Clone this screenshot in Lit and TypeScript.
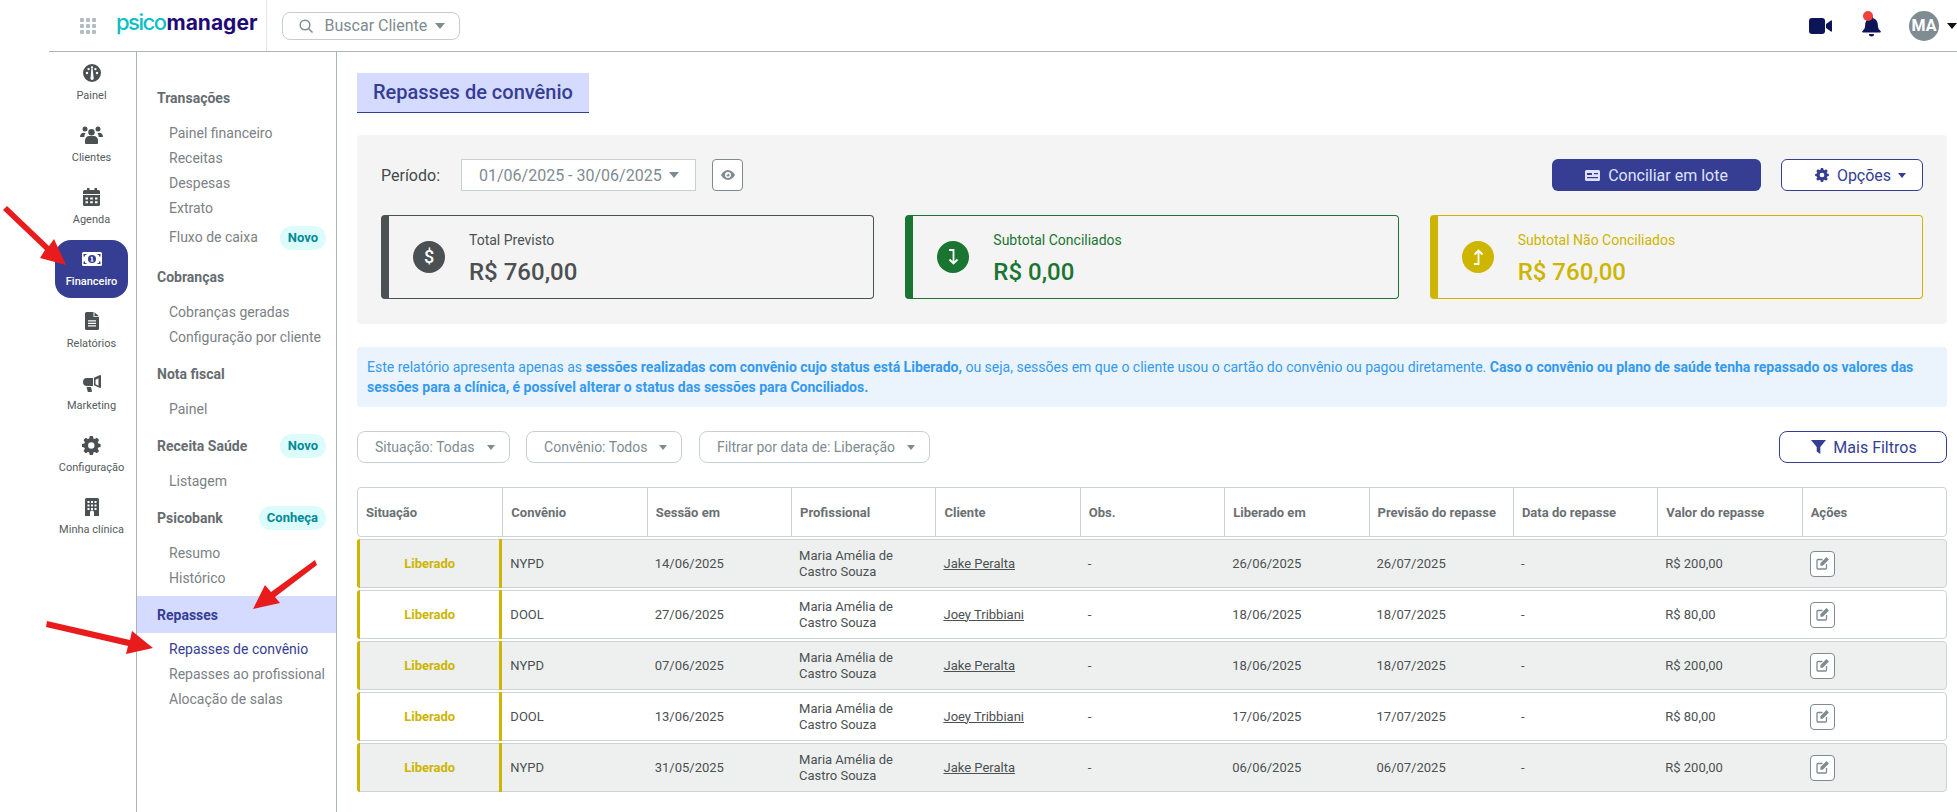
import { LitElement, html, css, svg } from "lit";
import { customElement } from "lit/decorators.js";

const I = {
  painel: svg`<path fill-rule="evenodd" d="M9 0a9 9 0 1 0 0 18A9 9 0 0 0 9 0ZM4 10.200a1.200 1.200 0 1 1 0-2.400 1.200 1.200 0 0 1 0 2.400Zm1.600-3.900a1.200 1.200 0 1 1 0-2.400 1.200 1.200 0 0 1 0 2.400ZM9 4.700a1.200 1.200 0 1 1 0-2.400 1.200 1.200 0 0 1 0 2.400Zm1.600 8.900a1.700 1.700 0 1 1-3 0L8.300 5h1.400l.9 8.600Zm1.800-7.300a1.200 1.200 0 1 1 0-2.400 1.200 1.200 0 0 1 0 2.400Zm1.600 3.900a1.200 1.200 0 1 1 0-2.400 1.200 1.200 0 0 1 0 2.400Z"/>`,
  clientes: svg`<circle cx="5" cy="3" r="2.500"/><circle cx="18" cy="3" r="2.500"/><circle cx="11.500" cy="6.300" r="3.200"/><path d="M0 11c0-2.700 1.500-4.300 3.500-4.300.8 0 1.500.2 2 .6-.8 1-1.200 2.200-1.200 3.700H0ZM23 11c0-2.700-1.500-4.300-3.500-4.300-.8 0-1.500.2-2 .6.8 1 1.200 2.200 1.200 3.700H23ZM5 17v-2.500c0-2.800 2-4.500 4-4.500h5c2 0 4 1.700 4 4.500V17c0 .7-.5 1-1 1H6c-.5 0-1-.3-1-1Z"/>`,
  agenda: svg`<path fill-rule="evenodd" d="M4 0h2.500v2h5V0H14v2h1.500A1.500 1.500 0 0 1 17 3.500V6H0V3.500A1.500 1.500 0 0 1 1.500 2H4V0ZM0 7h17v9.500a1.500 1.500 0 0 1-1.500 1.500h-14A1.500 1.500 0 0 1 0 16.500V7Zm2.500 2.500v2h2.500v-2H2.500Zm4.700 0v2h2.600v-2H7.200Zm4.800 0v2h2.500v-2H12Zm-9.500 3.700v2h2.500v-2H2.500Zm4.700 0v2h2.600v-2H7.200Zm4.800 0v2h2.500v-2H12Z"/>`,
  fin: svg`<path fill-rule="evenodd" d="M1.500 0h17A1.500 1.500 0 0 1 20 1.500v11a1.500 1.500 0 0 1-1.500 1.500h-17A1.500 1.500 0 0 1 0 12.500v-11A1.500 1.500 0 0 1 1.500 0ZM1.500 2v2.500H3V3h1.500V2H1.500Zm0 10h3v-1H3V9.500H1.500V12Zm17-10h-3v1H17v1.500h1.500V2Zm0 10V9.500H17V11h-1.500v1h3ZM10 3a4 4 0 1 0 0 8 4 4 0 0 0 0-8Zm-.6 1.800h1.300v3.700h.8v1H8.600v-1h.8V6.100h-.7V5.300l.7-.5Z"/>`,
  rel: svg`<path fill-rule="evenodd" d="M1.500 0H8.500v5H14v11.500a1.500 1.500 0 0 1-1.500 1.500h-11A1.500 1.500 0 0 1 0 16.500v-15A1.500 1.500 0 0 1 1.500 0ZM9.500.2 14 4.200H9.500V.2ZM3 8.200v1.300h8V8.200H3Zm0 2.500V12h8v-1.300H3Zm0 2.500v1.300h8v-1.300H3Z"/>`,
  mkt: svg`<path fill-rule="evenodd" d="M17 0a1 1 0 0 1 1 1v11a1 1 0 0 1-1 1l-6-2.700V2.700L17 0Zm-1.500 3.300-3 1.400v4.600l3 1.400V3.300ZM10 3v8H4a4 4 0 0 1-4-4 4 4 0 0 1 4-4h6ZM3.500 12H8l1 4.500a.8.800 0 0 1-.8.500H5.500a.8.800 0 0 1-.8-.6L3.500 12Z"/>`,
  cog: svg`<path fill-rule="evenodd" d="M10.800 0h-3l-.6 2.500-1.300.6L3.700 1.700 1.500 4l1.400 2.200-.6 1.300L0 8v3l2.300.5.600 1.300L1.500 15l2.200 2.300 2.200-1.400 1.300.6.600 2.500h3l.6-2.500 1.300-.6 2.200 1.400L17.100 15l-1.400-2.200.6-1.300 2.300-.5V8l-2.300-.5-.6-1.300L17.100 4l-2.200-2.300-2.200 1.400-1.300-.6L10.800 0ZM9.300 6.300a3.200 3.200 0 1 1 0 6.400 3.200 3.200 0 0 1 0-6.400Z"/>`,
  predio: svg`<path fill-rule="evenodd" d="M1.500 0h11A1.500 1.500 0 0 1 14 1.500V18H9v-3.500a2 2 0 0 0-4 0V18H0V1.500A1.500 1.500 0 0 1 1.500 0ZM2.500 3v2h2V3h-2Zm3.500 0v2h2V3H6Zm3.500 0v2h2V3h-2Zm-7 3.500v2h2v-2h-2Zm3.500 0v2h2v-2H6Zm3.500 0v2h2v-2h-2Zm-7 3.500v2h2v-2h-2Zm7 0v2h2v-2h-2ZM6 10v2h2v-2H6Z"/>`,
};

const rail = [
  ["Painel", I.painel, 18, 18, ""],
  ["Clientes", I.clientes, 23, 18, ""],
  ["Agenda", I.agenda, 17, 18, ""],
  ["Financeiro", I.fin, 20, 14, "on"],
  ["Relatórios", I.rel, 14, 18, ""],
  ["Marketing", I.mkt, 18, 17, ""],
  ["Configuração", I.cog, 18.600, 19, ""],
  ["Minha clínica", I.predio, 14, 18, ""],
] as const;

type Row = [string, string, string, string, string, string];
const rows: Row[] = [
  ["NYPD", "14/06/2025", "Jake Peralta", "26/06/2025", "26/07/2025", "R$ 200,00"],
  ["DOOL", "27/06/2025", "Joey Tribbiani", "18/06/2025", "18/07/2025", "R$ 80,00"],
  ["NYPD", "07/06/2025", "Jake Peralta", "18/06/2025", "18/07/2025", "R$ 200,00"],
  ["DOOL", "13/06/2025", "Joey Tribbiani", "17/06/2025", "17/07/2025", "R$ 80,00"],
  ["NYPD", "31/05/2025", "Jake Peralta", "06/06/2025", "06/07/2025", "R$ 200,00"],
];
const cols = ["Situação", "Convênio", "Sessão em", "Profissional", "Cliente", "Obs.", "Liberado em", "Previsão do repasse", "Data do repasse", "Valor do repasse", "Ações"];

const caret = (c: string) => html`<i class="caret" style="border-top-color:${c}"></i>`;

@customElement("app-root")
export class AppRoot extends LitElement {
  static styles = css`
    :host { display: block; position: relative; width: 1957px; height: 812px; overflow: hidden; background: #fff; font-family: Roboto, sans-serif; color: #4b5052; }
    * { box-sizing: border-box; }
    .caret { display: inline-block; width: 0; height: 0; border-left: 5px solid transparent; border-right: 5px solid transparent; border-top: 6px solid #7e8b91; }
    .top { height: 52px; margin-left: 49px; border-bottom: 1px solid #aab5bb; display: flex; align-items: center; }
    .grid9 { width: 16px; height: 16px; margin-left: 31px; display: grid; grid-template-columns: repeat(3, 4px); grid-auto-rows: 4px; gap: 2px; }
    .grid9 b { background: #b3bcc0; border-radius: 1px; }
    .logo { margin-left: 20px; width: 150.500px; height: 51px; border-right: 1px solid #e3e6e7; font-family: Inter, sans-serif; font-weight: 700; font-size: 21px; letter-spacing: 0; line-height: 44px; color: #1f0a78; white-space: nowrap; }
    .logo span { color: #0bc0c4; font-weight: 500; font-size: 22px; letter-spacing: -1.500px; margin-right: 1px; }
    .search { margin-left: 15px; width: 178px; height: 28px; border: 1px solid #c6cdd0; border-radius: 8px; display: flex; align-items: center; padding-left: 16px; color: #7e8b91; font-size: 16px; }
    .search svg { margin-right: 12px; }
    .search .caret { margin-left: 8px; border-top-color: #7e8b91; }
    .right { margin-left: auto; display: flex; align-items: center; height: 51px; }
    .bell { position: relative; margin-left: 30px; height: 22px; width: 19px; }
    .bell::after { content: ""; position: absolute; left: 1px; top: -4px; width: 10px; height: 10px; border-radius: 50%; background: #f0413a; }
    .avatar { margin-left: 28px; width: 30px; height: 30px; border-radius: 50%; background: #7f8d93; color: #fff; font-weight: 700; font-size: 16px; display: flex; align-items: center; justify-content: center; }
    .right .caret { margin-left: 8px; border-top-color: #111; }

    .body { display: flex; height: 760px; margin-left: 49px; }
    .rail { width: 88px; border-right: 1px solid #aab5bb; padding: 2px 8px 0 6px; display: flex; flex-direction: column; gap: 4px; }
    .ri { height: 58px; border-radius: 16px; display: flex; flex-direction: column; align-items: center; font-size: 11px; color: #555b5e; position: relative; }
    .ri .ic { height: 38px; display: flex; align-items: center; justify-content: center; fill: #4b5052; }
    .ri .lb { line-height: 14px; margin-top: -3px; white-space: nowrap; }
    .ri.on { background: #353e93; color: #fff; font-weight: 500; }
    .ri.on .ic { fill: #fff; }

    .sub { width: 200px; border-right: 1px solid #aab5bb; padding: 33px 0 0; font-size: 14px; color: #7b8184; }
    .h { height: 25px; padding: 0 10px 0 20px; display: flex; align-items: center; justify-content: space-between; font-weight: 700; color: #666c6f; margin-bottom: 11px; }
    .it { height: 25px; line-height: 25px; padding-left: 32px; white-space: nowrap; }
    .grp { margin-bottom: 11px; }
    .flux { height: 33px; margin-bottom: -1px; display: flex; align-items: center; justify-content: space-between; padding-right: 10px; }
    .pill { height: 24px; line-height: 24px; padding: 0 8px; border-radius: 12px; background: #dbfbfd; color: #018a96; font-weight: 700; font-size: 13px; }
    .band { height: 37px; padding-top: 6px; padding-bottom: 6px; margin: -6px 0 4px; background: #d5daff; color: #353e93; }
    .cur { color: #353e93; }

    .main { flex: 1; padding: 21px 10px 0 20px; min-width: 0; }
    .title { display: inline-block; height: 40px; line-height: 38px; padding: 0 16px; background: #d5daff; border-bottom: 1px solid #353e93; color: #353e93; font-size: 20px; font-weight: 500; }
    .panel { margin-top: 22px; height: 189px; background: #f4f4f4; border-radius: 4px; padding: 24px 24px 0 24px; }
    .pr { display: flex; align-items: center; height: 32px; }
    .pr .lab { font-size: 16px; color: #444a4c; width: 80px; }
    .date { width: 235px; height: 32px; background: #fff; border: 1px solid #c8cfd0; padding-left: 17px; display: flex; align-items: center; font-size: 16px; color: #7e8b91; white-space: nowrap; }
    .date .caret { margin-left: 7px; }
    .eye { margin-left: 16px; width: 31px; height: 32px; background: #fff; border: 1px solid #7e8b91; border-radius: 4px; display: flex; align-items: center; justify-content: center; }
    .btn { height: 32px; border-radius: 6px; display: flex; align-items: center; justify-content: center; font-size: 16px; }
    .solid { margin-left: auto; width: 209px; background: #353e93; color: #dfe2ff; gap: 8px; }
    .line { background: #fff; border: 1px solid #353e93; color: #353e93; }
    .opt { margin-left: 20px; width: 142px; gap: 8px; padding-left: 17px; }
    .opt .caret { margin-left: -1px; border-left-width: 4px; border-right-width: 4px; border-top-width: 5px; }
    .cards { margin-top: 24px; display: grid; grid-template-columns: repeat(3, 1fr); gap: 31px; }
    .card { height: 84px; border: 1px solid currentColor; border-left-width: 8px; border-radius: 4px; display: flex; align-items: center; padding-left: 24px; }
    .circ { width: 32px; height: 32px; border-radius: 50%; background: currentColor; display: flex; align-items: center; justify-content: center; flex: none; }
    .ct { margin-left: 24px; padding-top: 4px; }
    .ct .a { font-size: 14px; line-height: 20px; }
    .ct .v { font-size: 24px; line-height: 32px; font-weight: 500; margin-top: 6px; }
    .g { color: #4b5052; } .v2 { color: #1b7532; } .y { color: #cdb500; }

    .info { margin-top: 23px; height: 60px; background: #ebf3fd; border-radius: 4px; padding: 10px; color: #339af0; font-size: 14px; line-height: 20px; }
    .info b { font-weight: 700; }
    .fil { margin-top: 24px; height: 32px; display: flex; gap: 16.500px; }
    .f { height: 32px; background: #fff; border: 1px solid #c9d0d3; border-radius: 8px; padding: 0 14px 0 17px; display: flex; align-items: center; gap: 12px; color: #7e8b91; font-size: 14px; white-space: nowrap; }
    .f .caret { border-left-width: 4.500px; border-right-width: 4.500px; border-top-width: 5px; }
    .more { margin-left: auto; width: 168px; height: 32px; gap: 7px; font-size: 16px; border-radius: 8px; padding-left: 2px; }
    .tb { margin-top: 24px; }
    .tr { display: grid; grid-template-columns: repeat(11, 1fr); border: 1px solid #cdd2d4; border-radius: 4px; }
    .th { height: 50px; font-weight: 700; font-size: 13px; color: #6a7073; }
    .th div { display: flex; align-items: center; padding-left: 8px; border-left: 1px solid #cdd2d4; white-space: nowrap; }
    .th div:first-child { border-left: 0; padding-left: 8px; }
    .td { height: 49px; margin-top: 2px; font-size: 13px; color: #4b5052; background: #fff; }
    .td.alt { background: #eef0ef; }
    .td > div { display: flex; align-items: center; padding-left: 8px; line-height: 16px; }
    .td > .st { border-left: 3px solid #cdb500; border-right: 3px solid #cdb500; border-radius: 3px 0 0 3px; margin: -1px 0 -1px -1px; padding: 0; justify-content: center; color: #cdb500; font-weight: 700; }
    .td a { color: #4b5052; text-decoration: underline; }
    .act { width: 25px; height: 26px; border: 1px solid #7e8b91; border-radius: 4px; background: #fff; display: flex; align-items: center; justify-content: center; }
    .arrows { position: absolute; left: 0; top: 0; pointer-events: none; }
  `;

  render() {
    return html`
      <div class="top">
        <div class="grid9">${Array.from({ length: 9 }, () => html`<b></b>`)}</div>
        <div class="logo"><span>psico</span>manager</div>
        <div class="search">
          <svg width="14" height="14" viewBox="0 0 14 14" fill="none" stroke="#7e8b91" stroke-width="1.500"><circle cx="6" cy="6" r="4.800"/><path d="M9.500 9.500 13.500 13.500"/></svg>
          Buscar Cliente ${caret("#7e8b91")}
        </div>
        <div class="right">
          <svg width="23" height="16" viewBox="0 0 23 16" fill="#0b1558"><rect width="16" height="16" rx="3"/><path d="M17 6 22 2.500a.6.600 0 0 1 1 .5v10a.6.600 0 0 1-1 .5L17 10V6Z"/></svg>
          <div class="bell">
            <svg width="19" height="22" viewBox="0 0 19 22" fill="#0b1558"><path d="M9.500 1a1.500 1.500 0 0 1 1.500 1.500v.7c3 .7 4.800 3.300 4.800 6.300 0 3.500.9 5 2.700 6.500.6.500.3 1.500-.5 1.500H1c-.8 0-1.100-1-.5-1.500C2.300 14.500 3.200 13 3.200 9.500c0-3 1.800-5.600 4.800-6.300v-.7A1.500 1.500 0 0 1 9.500 1ZM7 19h5a2.500 2.500 0 0 1-5 0Z"/></svg>
          </div>
          <div class="avatar">MA</div>
          ${caret("#111")}
        </div>
      </div>
      <div class="body">
        <nav class="rail">
          ${rail.map(([l, ic, w, h, on]) => html`<div class="ri ${on}"><div class="ic"><svg width="${w}" height="${h}" viewBox="0 0 ${w} ${h}">${ic}</svg></div><div class="lb">${l}</div></div>`)}
        </nav>
        <nav class="sub">
          <div class="h">Transações</div>
          <div class="grp">
            <div class="it">Painel financeiro</div><div class="it">Receitas</div><div class="it">Despesas</div><div class="it">Extrato</div>
            <div class="it flux">Fluxo de caixa <span class="pill">Novo</span></div>
          </div>
          <div class="h">Cobranças</div>
          <div class="grp"><div class="it">Cobranças geradas</div><div class="it">Configuração por cliente</div></div>
          <div class="h">Nota fiscal</div>
          <div class="grp"><div class="it">Painel</div></div>
          <div class="h">Receita Saúde <span class="pill">Novo</span></div>
          <div class="grp"><div class="it">Listagem</div></div>
          <div class="h">Psicobank <span class="pill">Conheça</span></div>
          <div class="grp"><div class="it">Resumo</div><div class="it">Histórico</div></div>
          <div class="h band">Repasses</div>
          <div class="it cur">Repasses de convênio</div><div class="it">Repasses ao profissional</div><div class="it">Alocação de salas</div>
        </nav>
        <main class="main">
          <div class="title">Repasses de convênio</div>
          <section class="panel">
            <div class="pr">
              <div class="lab">Período:</div>
              <div class="date">01/06/2025 - 30/06/2025 ${caret("#7e8b91")}</div>
              <div class="eye"><svg width="14" height="12" viewBox="0 0 14 12" fill="#7e8b91"><path fill-rule="evenodd" d="M7 1c3 0 5.500 2.200 7 5-1.500 2.800-4 5-7 5S1.500 8.800 0 6c1.500-2.800 4-5 7-5Zm0 2a3 3 0 1 0 0 6 3 3 0 0 0 0-6Zm0 1.500a1.500 1.500 0 1 1-1.500 1.500c0-.3 1-.2 1.200-.5.200-.3 0-1 .3-1Z"/></svg></div>
              <div class="btn solid"><svg width="15" height="11" viewBox="0 0 15 11" fill="#dfe2ff"><path fill-rule="evenodd" d="M1.500 0h12A1.500 1.500 0 0 1 15 1.500v8a1.500 1.500 0 0 1-1.500 1.500h-12A1.500 1.500 0 0 1 0 9.500v-8A1.500 1.500 0 0 1 1.500 0ZM2 3v2h5V3H2Zm7 0v1.200h4V3H9ZM2 7v1.200h11V7H2Z"/></svg>Conciliar em lote</div>
              <div class="btn line opt"><svg width="14" height="14" viewBox="0 0 18.600 19" fill="#353e93">${I.cog}</svg>Opções ${caret("#353e93")}</div>
            </div>
            <div class="cards">
              ${this.card("g", "Total Previsto", svg`<text x="10" y="16" text-anchor="middle" font-size="18" font-weight="500" fill="#fff" font-family="Roboto">$</text>`, "R$ 760,00")}
              ${this.card("v2", "Subtotal Conciliados", svg`<path d="M6 3h4.500v13M6.500 12.500l4 4 4-4" fill="none" stroke="#fff" stroke-width="1.800"/>`, "R$ 0,00")}
              ${this.card("y", "Subtotal Não Conciliados", svg`<path d="M6 17h4.500V4M6.500 7.500l4-4 4 4" fill="none" stroke="#fff" stroke-width="1.800"/>`, "R$ 760,00")}
            </div>
          </section>
          <div class="info">Este relatório apresenta apenas as <b>sessões realizadas com convênio cujo status está Liberado,</b> ou seja, sessões em que o cliente usou o cartão do convênio ou pagou diretamente. <b>Caso o convênio ou plano de saúde tenha repassado os valores das</b><br /><b>sessões para a clínica, é possível alterar o status das sessões para Conciliados.</b></div>
          <div class="fil">
            <div class="f">Situação: Todas ${caret("#7e8b91")}</div>
            <div class="f">Convênio: Todos ${caret("#7e8b91")}</div>
            <div class="f">Filtrar por data de: Liberação ${caret("#7e8b91")}</div>
            <div class="btn line more"><svg width="15" height="14" viewBox="0 0 15 14" fill="#353e93"><path d="M0 0h15L9.300 7v7L5.700 11.500V7L0 0Z"/></svg>Mais Filtros</div>
          </div>
          <div class="tb">
            <div class="tr th">${cols.map((c) => html`<div>${c}</div>`)}</div>
            ${rows.map((r, i) => html`
              <div class="tr td ${i % 2 === 0 ? "alt" : ""}">
                <div class="st">Liberado</div>
                <div>${r[0]}</div><div>${r[1]}</div>
                <div>Maria Amélia de<br />Castro Souza</div>
                <div><a>${r[2]}</a></div><div>-</div>
                <div>${r[3]}</div><div>${r[4]}</div><div>-</div><div>${r[5]}</div>
                <div><span class="act"><svg width="13" height="13" viewBox="0 0 13 13" fill="none" stroke="#7e8b91" stroke-width="1.300"><path d="M6.500 2.500H2a1 1 0 0 0-1 1V11a1 1 0 0 0 1 1h7.500a1 1 0 0 0 1-1V7"/><path d="M5 6.500 10.500 1 12 2.500 6.500 8H5V6.500Z" fill="#7e8b91"/></svg></span></div>
              </div>`)}
          </div>
        </main>
      </div>
      <svg class="arrows" width="340" height="700" viewBox="0 0 340 700" fill="#e81c1c">
        <path d="M7 206 49 246 54 239 66 265 40 258 45 250 3 210Z"/>
        <path d="M315 560 317 565 275 597 280 603 253 609 265 585 271 592Z"/>
        <path d="M47 621 130 640 132 631 153 648 126 654 128 646 46 627Z"/>
      </svg>`;
  }

  card(cls: string, label: string, icon: unknown, value: string) {
    return html`<div class="card ${cls}">
      <div class="circ"><svg width="20" height="20" viewBox="0 0 20 20">${icon}</svg></div>
      <div class="ct"><div class="a">${label}</div><div class="v">${value}</div></div>
    </div>`;
  }
}
